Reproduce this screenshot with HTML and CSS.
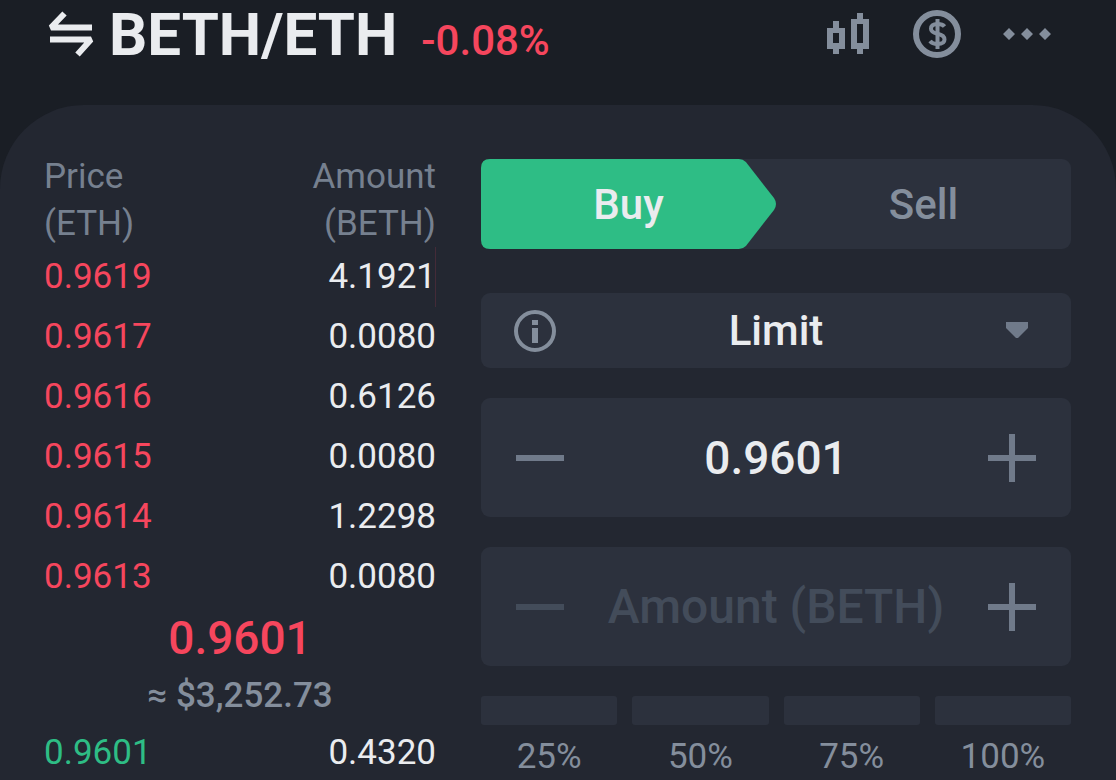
FILE: index.html
```html
<!DOCTYPE html>
<html lang="en">
<head>
  <meta charset="UTF-8">
  <meta name="viewport" content="width=device-width, initial-scale=1.0">
  <title>BETH/ETH</title>
  <link rel="stylesheet" href="styles.css">
</head>
<body>
  <header class="topbar">
    <div class="pair">
      <button class="icon-btn swap-btn" aria-label="Switch pair">
        <svg viewBox="0 0 48 48" fill="none" stroke="currentColor" stroke-width="6">
          <path d="M45 16.500H4L17.500 2.500M3 28.500H44L30.500 43.500" stroke-linejoin="bevel"/>
        </svg>
      </button>
      <h1>BETH/ETH</h1>
      <span class="change">-0.08%</span>
    </div>
    <nav class="tools">
      <button class="icon-btn" aria-label="Chart">
        <svg viewBox="0 0 48 48" fill="currentColor" fill-rule="evenodd">
          <path d="M10 11h6v7h6v21h-6v5h-6v-5H4V18h6zM10 23v10h6V23z"/>
          <path d="M34 3h6v6h6v30h-6v5h-6v-5h-6V9h6zM34 14v19h6V14z"/>
        </svg>
      </button>
      <button class="icon-btn" aria-label="Margin">
        <svg viewBox="0 0 48 48" fill="none" stroke="currentColor">
          <circle cx="24" cy="24" r="21" stroke-width="6"/>
          <path d="M31.500 16.500C30 14.500 27.500 14 24.500 14C20.500 14 18 15.500 18 18.800C18 21.500 20 22.800 24.500 23.800C29 24.800 31.500 26.500 31.500 29.500C31.500 32.500 28.500 34 24.500 34C21 34 18.500 33 17 31" stroke-width="4"/>
          <path d="M24.500 9V39" stroke-width="4"/>
        </svg>
      </button>
      <button class="icon-btn" aria-label="More">
        <svg viewBox="0 0 48 48" fill="currentColor">
          <path d="M6 18l6 6-6 6-6-6zM24 18l6 6-6 6-6-6zM42 18l6 6-6 6-6-6z"/>
        </svg>
      </button>
    </nav>
  </header>

  <main class="panel">
    <table class="book">
      <thead>
        <tr>
          <th>Price<br>(ETH)</th>
          <th>Amount<br>(BETH)</th>
        </tr>
      </thead>
      <tbody class="asks">
        <tr class="depth"><td>0.9619</td><td>4.1921</td></tr>
        <tr><td>0.9617</td><td>0.0080</td></tr>
        <tr><td>0.9616</td><td>0.6126</td></tr>
        <tr><td>0.9615</td><td>0.0080</td></tr>
        <tr><td>0.9614</td><td>1.2298</td></tr>
        <tr><td>0.9613</td><td>0.0080</td></tr>
      </tbody>
      <tbody class="last">
        <tr><td colspan="2" class="last-price">0.9601</td></tr>
        <tr><td colspan="2" class="last-fiat">≈ $3,252.73</td></tr>
      </tbody>
      <tbody class="bids">
        <tr><td>0.9601</td><td>0.4320</td></tr>
      </tbody>
    </table>

    <form class="order">
      <div class="tabs">
        <button type="button" class="tab buy">
          <svg class="tab-shape" viewBox="0 0 294 90" preserveAspectRatio="none" aria-hidden="true">
            <path d="M9 0H257Q261 0 264 3L292 39Q296 45 292 51L264 87Q261 90 257 90H9Q0 90 0 81V9Q0 0 9 0Z"/>
          </svg>
          <span>Buy</span>
        </button>
        <button type="button" class="tab sell">Sell</button>
      </div>

      <div class="field type">
        <svg class="field-icon info" viewBox="0 0 42 42" aria-hidden="true">
          <circle cx="21" cy="21" r="19" fill="none" stroke="currentColor" stroke-width="4"/>
          <path d="M18 10h6v5h-6zM18 18h6v15h-6z" fill="currentColor"/>
        </svg>
        <select aria-label="Order type">
          <option>Limit</option>
          <option>Market</option>
        </select>
        <svg class="field-icon" viewBox="0 0 42 42" aria-hidden="true">
          <path d="M10 12h22v6L22 28h-2L10 18z" fill="currentColor"/>
        </svg>
      </div>

      <div class="field stepper">
        <button type="button" class="icon-btn" aria-label="Decrease price">
          <svg viewBox="0 0 48 48"><path d="M0 21h48v6H0z" fill="currentColor"/></svg>
        </button>
        <input type="text" value="0.9601" aria-label="Price">
        <button type="button" class="icon-btn" aria-label="Increase price">
          <svg viewBox="0 0 48 48"><path d="M0 21h21V0h6v21h21v6H27v21h-6V27H0z" fill="currentColor"/></svg>
        </button>
      </div>

      <div class="field stepper">
        <button type="button" class="icon-btn" aria-label="Decrease amount" disabled>
          <svg viewBox="0 0 48 48"><path d="M0 21h48v6H0z" fill="currentColor"/></svg>
        </button>
        <input type="text" placeholder="Amount (BETH)" aria-label="Amount">
        <button type="button" class="icon-btn" aria-label="Increase amount">
          <svg viewBox="0 0 48 48"><path d="M0 21h21V0h6v21h21v6H27v21h-6V27H0z" fill="currentColor"/></svg>
        </button>
      </div>

      <div class="percents">
        <button type="button"><i></i>25%</button>
        <button type="button"><i></i>50%</button>
        <button type="button"><i></i>75%</button>
        <button type="button"><i></i>100%</button>
      </div>
    </form>
  </main>
</body>
</html>
```
FILE: styles.css
```css
* {
  margin: 0;
  padding: 0;
  box-sizing: border-box;
}

body {
  display: flex;
  flex-direction: column;
  height: 100vh;
  overflow: hidden;
  font-family: Roboto, 'Liberation Sans', sans-serif;
  background: #1a1e25;
  color: #eaecef;
}

button,
input,
select {
  font: inherit;
  color: inherit;
  background: none;
  border: none;
  outline: none;
}

button {
  cursor: pointer;
}

svg {
  display: block;
}

.icon-btn {
  flex: none;
  width: 48px;
  height: 48px;
}

/* Top bar */
.topbar {
  display: flex;
  flex: none;
  justify-content: space-between;
  align-items: flex-start;
  height: 105px;
  padding: 0 65px 0 47px;
}

.pair {
  display: flex;
  align-items: baseline;
}

.swap-btn {
  align-self: center;
  margin-right: 14px;
}

.pair h1 {
  font-size: 60px;
  line-height: 70px;
  font-weight: 700;
}

.change {
  margin-left: 24px;
  font-size: 42px;
  font-weight: 500;
  color: #f6465d;
}

.tools {
  display: flex;
  gap: 42px;
  padding-top: 10px;
  color: #848e9c;
}

/* Panel */
.panel {
  display: grid;
  flex: 1 0 auto;
  grid-template-columns: minmax(0, 392fr) minmax(0, 590fr);
  align-items: start;
  gap: 45px;
  padding: 48px 45px 0 44px;
  background: #232731;
  border-radius: 84px 84px 0 0;
}

/* Order book */
.book {
  width: 100%;
  border-collapse: collapse;
  font-size: 35px;
}

.book th {
  font-weight: 400;
  line-height: 47px;
  text-align: left;
  color: #76808f;
}

.book td {
  height: 60px;
  line-height: 42px;
}

.book th:last-child,
.book td:last-child {
  text-align: right;
}

.asks td:first-child {
  color: #f6465d;
}

.bids td:first-child {
  color: #2ebd85;
}

.depth td:last-child {
  background: linear-gradient(#442b38, #442b38) right / 1px 100% no-repeat;
}

.book .last td {
  font-weight: 500;
  text-align: center;
}

.book .last .last-price {
  height: 62px;
  font-size: 46px;
  color: #f6465d;
}

.book .last .last-fiat {
  height: 54px;
  color: #848e9c;
}

/* Order form */
.order {
  display: flex;
  flex-direction: column;
  gap: 30px;
  padding-top: 6px;
}

.tabs {
  display: grid;
  grid-template-columns: 1fr 1fr;
  height: 90px;
  margin-bottom: 14px;
  background: #2c313d;
  border-radius: 9px;
}

.tab {
  position: relative;
  font-size: 42px;
  font-weight: 500;
}

.tab span {
  position: relative;
}

.tab-shape {
  position: absolute;
  inset: 0;
  width: 100%;
  height: 100%;
  fill: #2ebd85;
}

.sell {
  color: #848e9c;
}

.field {
  display: flex;
  align-items: center;
  background: #2c313d;
  border-radius: 9px;
}

.type {
  height: 75px;
  padding: 0 33px;
}

.field-icon {
  flex: none;
  width: 42px;
  height: 42px;
  color: #707a8a;
}

.info {
  color: #848e9c;
}

.type select {
  flex: 1;
  min-width: 0;
  height: 100%;
  appearance: none;
  font-size: 42px;
  font-weight: 500;
  text-align: center;
  text-align-last: center;
}

.stepper {
  height: 119px;
  padding: 0 35px;
}

.stepper .icon-btn {
  color: #707a8a;
}

.stepper .icon-btn:disabled {
  color: #434c5a;
}

.stepper input {
  flex: 1;
  min-width: 0;
  height: 100%;
  font-size: 46px;
  font-weight: 500;
  text-align: center;
}

.stepper input::placeholder {
  font-size: 48px;
  color: #434c5a;
  opacity: 1;
}

/* Percent shortcuts */
.percents {
  display: grid;
  grid-template-columns: repeat(4, 1fr);
  gap: 15px;
}

.percents button {
  font-size: 35px;
  line-height: 40px;
  color: #848e9c;
}

.percents i {
  display: block;
  height: 29px;
  margin-bottom: 12px;
  background: #2c313d;
  border-radius: 3px;
}
```
